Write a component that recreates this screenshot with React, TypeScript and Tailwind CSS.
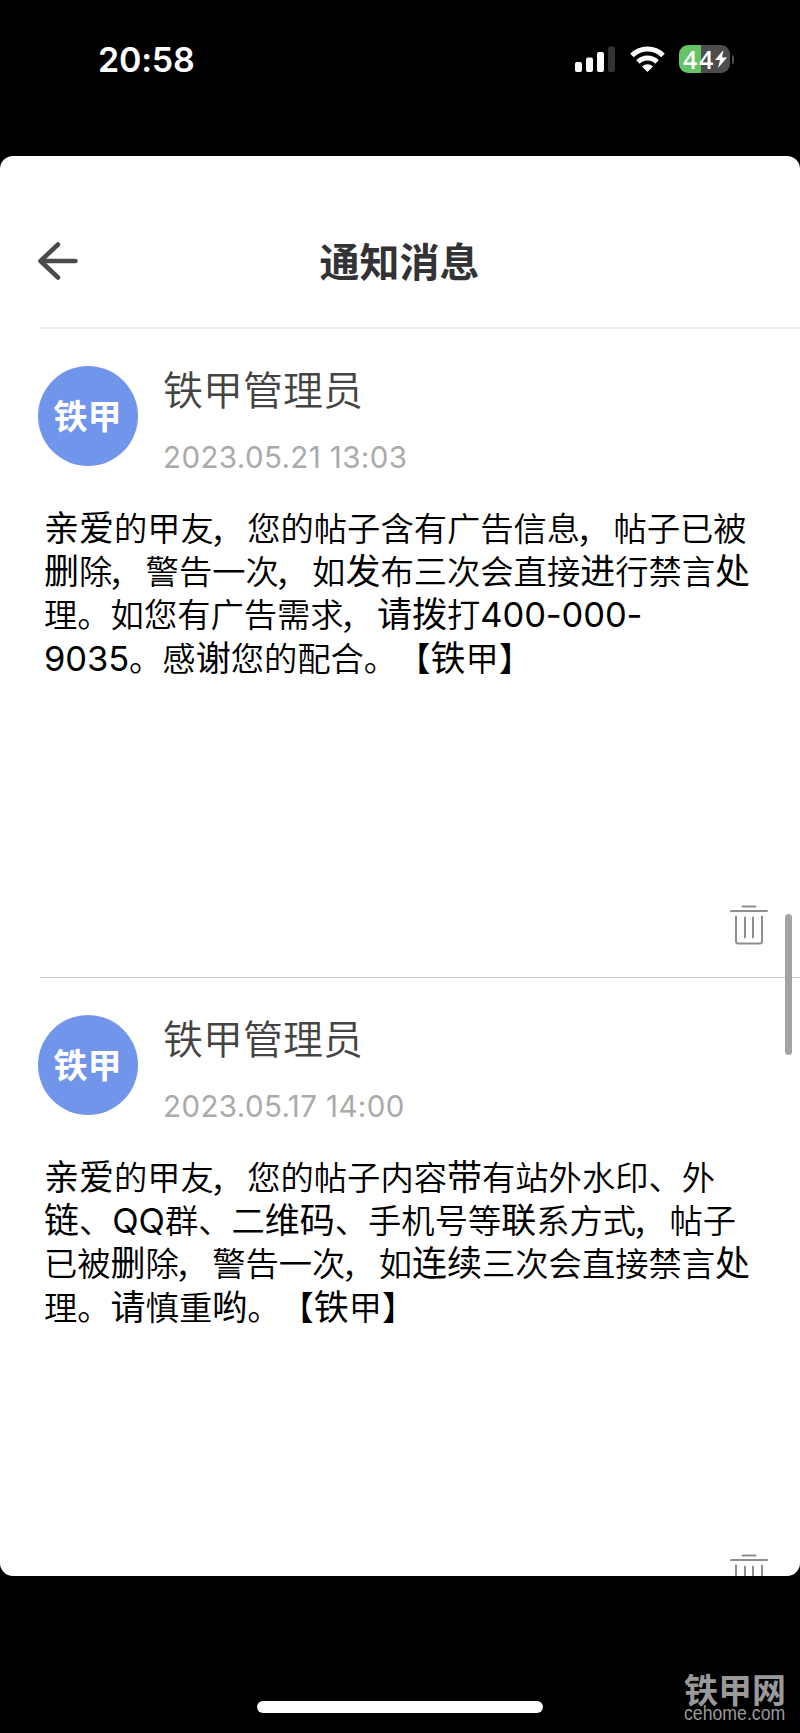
interface Message { id: string; sender: string; time: string; lines: string[] }

const messages: Message[] = [
  {
    id: '1',
    sender: '铁甲管理员',
    time: '2023.05.21 13:03',
    lines: [
      '亲爱的甲友\uFF0C您的帖子含有广告信息\uFF0C帖子已被',
      '删除\uFF0C警告一次\uFF0C如发布三次会直接进行禁言处',
      '理。如您有广告需求\uFF0C请拨打400-000-',
      '9035。感谢您的配合。【铁甲】',
    ],
  },
  {
    id: '2',
    sender: '铁甲管理员',
    time: '2023.05.17 14:00',
    lines: [
      '亲爱的甲友\uFF0C您的帖子内容带有站外水印、外',
      '链、QQ群、二维码、手机号等联系方式\uFF0C帖子',
      '已被删除\uFF0C警告一次\uFF0C如连续三次会直接禁言处',
      '理。请慎重哟。【铁甲】',
    ],
  },
]

const FALLBACK = /([亲爱删发进处请拨谢铁链维码带联连续哟]+|[0-9Q-]+|\uFF0C)/

function BodyLine({ text }: { text: string }) {
  return (
    <p className="h-[43.2px] whitespace-nowrap">
      {text.split(FALLBACK).map((run, i) => {
        if (run === '\uFF0C') return <span key={i} className="relative top-[2px] -left-[4px]">{run}</span>
        if (/^[0-9Q-]/.test(run)) return <span key={i} className="text-[34.5px] leading-[0] font-normal tracking-[-0.1px]">{run}</span>
        if (i % 2) return <span key={i} className="text-[35px] leading-[0] font-normal">{run}</span>
        return <span key={i}>{run}</span>
      })}
    </p>
  )
}

function TrashIcon() {
  return (
    <svg width="38" height="41" viewBox="0 0 38 41" fill="none" stroke="#8e8e8e" strokeWidth="2" strokeLinecap="round" strokeLinejoin="round">
      <path d="M12.500 1.500h13M1 6h36M6 11.500v24.500a2.500 2.500 0 0 0 2.500 2.500h21a2.500 2.500 0 0 0 2.500-2.500V11.500M15 12.500v20M23 12.500v20" />
    </svg>
  )
}

function StatusBar() {
  return (
    <header className="flex h-[156px] items-start justify-between pt-[38px] pr-[66px] pl-[98px] text-white">
      <span className="text-[34px] leading-[44px] font-semibold tracking-[-0.2px]">20:58</span>
      <div className="flex items-center pt-[7px]">
        <svg width="40" height="26" viewBox="0 0 40 26" fill="#fff">
          <rect x="0" y="16" width="7" height="10" rx="2" />
          <rect x="11" y="11.500" width="7" height="14.500" rx="2" />
          <rect x="22" y="6" width="7" height="20" rx="2" />
          <rect x="33" y="0.500" width="7" height="25.500" rx="2" fill="#333" />
        </svg>
        <svg className="ml-[15px]" width="35" height="26" viewBox="0 0 35 26" fill="none" stroke="#fff" strokeWidth="5">
          <path d="M2 9.500a22 22 0 0 1 31 0M8 16a13.500 13.500 0 0 1 19 0" />
          <path d="M17.500 26l-5.500-5.500a8 8 0 0 1 11 0z" fill="#fff" stroke="none" />
        </svg>
        <div className="ml-[14px] flex h-7 w-[51px] items-center rounded-[9px] bg-linear-to-r from-[#65c466] from-[44%] to-[#4d4d4d] to-[44%] pl-[4px]">
          <span className="font-['Open_Sans'] text-[25px] leading-7 font-semibold tracking-[1.7px]">44</span>
          <svg width="12" height="18" viewBox="0 0 12 18" fill="#fff">
            <path d="M8.500 0L0 10h5L3 18l9-10.500H7z" />
          </svg>
        </div>
        <span className="ml-[1.5px] h-[9px] w-[2.5px] rounded-r-full bg-[#4d4d4d]" />
      </div>
    </header>
  )
}

function MessageItem({ message }: { message: Message }) {
  return (
    <article className="relative ml-10 h-[649px] shrink-0 border-t border-[#c8c8c8] first:h-[650px] first:border-t-2 first:border-[#ececec]">
      <div className="-ml-[3px] flex h-[174px] pt-[37px]">
        <div className="ml-[0.5px] flex size-[100px] items-center justify-center rounded-full bg-[#7195ea] text-[34px] font-bold text-white">
          铁甲
        </div>
        <div className="ml-[25.5px]">
          <h2 className="-mt-[5px] text-[40px] leading-[60px] font-[350] text-[#444]">{message.sender}</h2>
          <time className="mt-[17px] block text-[29.5px] leading-[38px] tracking-[0.4px] text-[#aaa]">{message.time}</time>
        </div>
      </div>
      <div className="ml-1 pt-[5px] text-[33.3px] leading-[43.2px] font-[350] text-black">
        {message.lines.map((line) => <BodyLine key={line} text={line} />)}
      </div>
      <button className="absolute top-[576px] right-[32px]"><TrashIcon /></button>
    </article>
  )
}

export default function App() {
  return (
    <div className="flex h-[1733px] w-[800px] flex-col overflow-hidden bg-black font-['Inter','Noto_Sans_CJK_SC',sans-serif] [text-spacing-trim:space-all]">
      <StatusBar />
      <main className="relative flex h-[1420px] shrink-0 flex-col overflow-hidden rounded-[13px] bg-white">
        <div className="flex h-[171px] shrink-0 items-center px-[38px] pt-[39px]">
          <svg width="40" height="38" viewBox="0 0 40 38" fill="none" stroke="#4a4a4c" strokeWidth="4.500" strokeLinecap="round" strokeLinejoin="round">
            <path d="M20 2.500L2.500 19L20 35.500M3 19h34.500" />
          </svg>
          <h1 className="flex-1 pt-[4px] pr-[41px] text-center text-[40px] font-bold text-[#333336]">通知消息</h1>
        </div>
        <div>
          {messages.map((m) => <MessageItem key={m.id} message={m} />)}
        </div>
        <div className="absolute top-[758px] right-[8px] h-[141px] w-[7px] rounded-full bg-[#a3a3a3]" />
      </main>
      <footer className="relative flex flex-1 justify-center pt-[125px]">
        <div className="h-[12px] w-[286px] rounded-full bg-white" />
        <div className="absolute top-[99px] right-[14px] w-[102px] text-[#999]">
          <p className="h-[32px] text-[34px] leading-[32px] font-bold">铁甲网</p>
          <p className="h-[14px] origin-left scale-y-[1.15] font-['Liberation_Sans'] text-[17.7px] leading-[12px]">cehome.com</p>
        </div>
      </footer>
    </div>
  )
}
